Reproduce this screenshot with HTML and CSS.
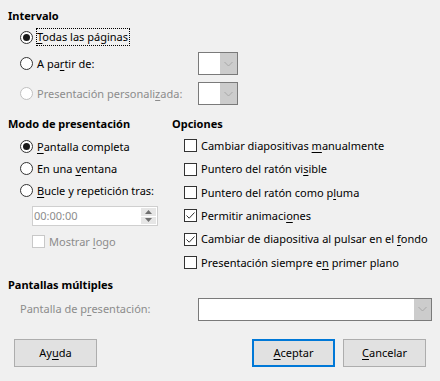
FILE: index.html
```html
<!DOCTYPE html>
<html lang="es">
<head>
<meta charset="utf-8">
<link rel="stylesheet" href="styles.css">
</head>
<body>
<div class="dialog">
  <div class="sec-interval">
    <div class="title">Intervalo</div>
    <div class="interval-grid">
      <div class="opt"><span class="radio checked"></span><span class="focus"><u>T</u>odas las páginas</span></div>
      <div></div>
      <div class="opt"><span class="radio"></span><span>A pa<u>r</u>tir de:</span></div>
      <div class="combo small"><span class="field"></span><span class="drop"><svg width="9" height="6" viewBox="0 0 9 6"><path d="M0.5 1 L4.5 5 L8.5 1" fill="none" stroke="#a8a8a8" stroke-width="1"/></svg></span></div>
      <div class="opt disabled"><span class="radio"></span><span>Presentación personali<u>z</u>ada:</span></div>
      <div class="combo small"><span class="field"></span><span class="drop"><svg width="9" height="6" viewBox="0 0 9 6"><path d="M0.5 1 L4.5 5 L8.5 1" fill="none" stroke="#a8a8a8" stroke-width="1"/></svg></span></div>
    </div>
  </div>

  <div class="sec-mode">
    <div class="col-left">
      <div class="title">Modo de presentación</div>
      <div class="mode-list">
        <div class="opt"><span class="radio checked"></span><span><u>P</u>antalla completa</span></div>
        <div class="opt"><span class="radio"></span><span>En una <u>v</u>entana</span></div>
        <div class="opt"><span class="radio"></span><span><u>B</u>ucle y repetición tras:</span></div>
      </div>
      <div class="spin">
        <span class="spin-text">00:00:00</span>
        <span class="spin-btns">
          <span class="sb"><svg width="7" height="4" viewBox="0 0 7 4"><path d="M3.5 0 L7 4 L0 4 Z" fill="#707070"/></svg></span>
          <span class="sb"><svg width="7" height="4" viewBox="0 0 7 4"><path d="M0 0 L7 0 L3.5 4 Z" fill="#707070"/></svg></span>
        </span>
      </div>
      <div class="opt disabled logo"><span class="check"></span><span>Mostrar <u>l</u>ogo</span></div>
    </div>
    <div class="col-right">
      <div class="title">Opciones</div>
      <div class="opt-list">
        <div class="opt"><span class="check"></span><span>Cambiar diapositivas <u>m</u>anualmente</span></div>
        <div class="opt"><span class="check"></span><span>Puntero del ratón vi<u>s</u>ible</span></div>
        <div class="opt"><span class="check"></span><span>Puntero del ratón como p<u>l</u>uma</span></div>
        <div class="opt"><span class="check checked"><svg width="11" height="11" viewBox="0 0 11 11"><path d="M1.5 5.5 L4.2 8.2 L9.5 2.5" fill="none" stroke="#333" stroke-width="1"/></svg></span><span>Permitir animaci<u>o</u>nes</span></div>
        <div class="opt"><span class="check checked"><svg width="11" height="11" viewBox="0 0 11 11"><path d="M1.5 5.5 L4.2 8.2 L9.5 2.5" fill="none" stroke="#333" stroke-width="1"/></svg></span><span>Cambiar de diapositiva al pulsar en el <u>f</u>ondo</span></div>
        <div class="opt"><span class="check"></span><span>Presentación siempre e<u>n</u> primer plano</span></div>
      </div>
    </div>
  </div>

  <div class="sec-multi">
    <div class="title">Pantallas múltiples</div>
    <div class="multi-row">
      <span class="multi-label">Pantalla de p<u>r</u>esentación:</span>
      <div class="combo wide"><span class="field"></span><span class="drop"><svg width="9" height="6" viewBox="0 0 9 6"><path d="M0.5 1 L4.5 5 L8.5 1" fill="none" stroke="#a8a8a8" stroke-width="1"/></svg></span></div>
    </div>
  </div>

  <div class="buttons">
    <button class="btn">Ay<u>u</u>da</button>
    <div class="btn-right">
      <button class="btn default"><u>A</u>ceptar</button>
      <button class="btn"><u>C</u>ancelar</button>
    </div>
  </div>
</div>
</body>
</html>
```

FILE: styles.css
```css
html, body {
  margin: 0;
  padding: 0;
  background: #f0f0f0;
}
body {
  width: 440px;
  height: 381px;
  overflow: hidden;
  font-family: "Noto Sans", "Open Sans", sans-serif;
  font-size: 11px;
  color: #000;
}
.dialog {
  padding: 8px 0 0 8px;
}
.title {
  font-weight: bold;
  line-height: 16px;
  height: 16px;
}
.opt {
  display: flex;
  align-items: center;
  line-height: 16px;
  white-space: nowrap;
}
.disabled { color: #8c8c8c; }
u { text-decoration-thickness: 1px; text-underline-offset: 2px; }

.radio {
  width: 13px;
  height: 13px;
  box-sizing: border-box;
  border: 1px solid #333;
  border-radius: 50%;
  background: #fff;
  margin-right: 4px;
  flex: none;
  display: flex;
  align-items: center;
  justify-content: center;
}
.radio.checked::after {
  content: "";
  width: 7px;
  height: 7px;
  border-radius: 50%;
  background: #1a1a1a;
}
.disabled .radio { border-color: #c0c0c0; }

.check {
  width: 13px;
  height: 13px;
  box-sizing: border-box;
  border: 1px solid #333;
  background: #fff;
  margin-right: 4px;
  flex: none;
  display: flex;
  align-items: center;
  justify-content: center;
}
.disabled .check { border-color: #c8c8c8; }

.focus {
  outline: 1px dotted #000;
  outline-offset: 0;
  padding: 0 1px 0 0;
}

.interval-grid {
  display: grid;
  grid-template-columns: 178px 40px;
  grid-template-rows: 16px 23px 23px;
  row-gap: 7px;
  margin: 5px 0 0 12px;
  align-items: center;
}

.combo {
  display: flex;
  height: 23px;
  box-sizing: border-box;
  border: 1px solid #7a7a7a;
  background: #fff;
}
.combo .field { flex: 1; }
.combo .drop {
  width: 17px;
  background: #cccccc;
  display: flex;
  align-items: center;
  justify-content: center;
}
.combo.small { width: 40px; }
.combo.wide { width: 234px; }

.sec-mode {
  display: flex;
  margin-top: 11px;
}
.col-left { width: 164px; flex: none; }
.mode-list {
  display: flex;
  flex-direction: column;
  gap: 6px;
  margin: 6.5px 0 0 12px;
}
.spin {
  display: flex;
  width: 126px;
  height: 20px;
  box-sizing: border-box;
  border: 1px solid #cfcfcf;
  background: #fff;
  margin: 7.5px 0 0 24px;
}
.spin-text {
  flex: 1;
  color: #8c8c8c;
  line-height: 18px;
  padding-left: 1px;
}
.spin-btns {
  width: 15px;
  display: flex;
  flex-direction: column;
  gap: 1px;
  padding: 1px 1px 1px 0;
}
.sb {
  flex: 1;
  background: #e6e6e6;
  display: flex;
  align-items: center;
  justify-content: center;
}
.logo { margin: 7.5px 0 0 24px; }

.col-right { flex: 1; min-width: 0; }
.opt-list {
  margin: 2.33px 0 0 12px;
}
.opt-list .opt { height: 23.33px; }

.sec-multi { margin-top: 2.67px; }
.multi-row {
  display: flex;
  align-items: center;
  margin: 5px 0 0 12px;
}
.multi-label {
  width: 178px;
  color: #8c8c8c;
  line-height: 16px;
}

.buttons {
  display: flex;
  justify-content: space-between;
  margin: 18px 14px 0 6px;
}
.btn-right { display: flex; gap: 8px; }
.btn {
  width: 83px;
  height: 28px;
  box-sizing: border-box;
  border: 1px solid #adadad;
  background: #e1e1e1;
  font-family: inherit;
  font-size: 11px;
  color: #000;
  padding: 0;
  margin: 0;
}
.btn.default { border: 2px solid #0078d7; }
```
